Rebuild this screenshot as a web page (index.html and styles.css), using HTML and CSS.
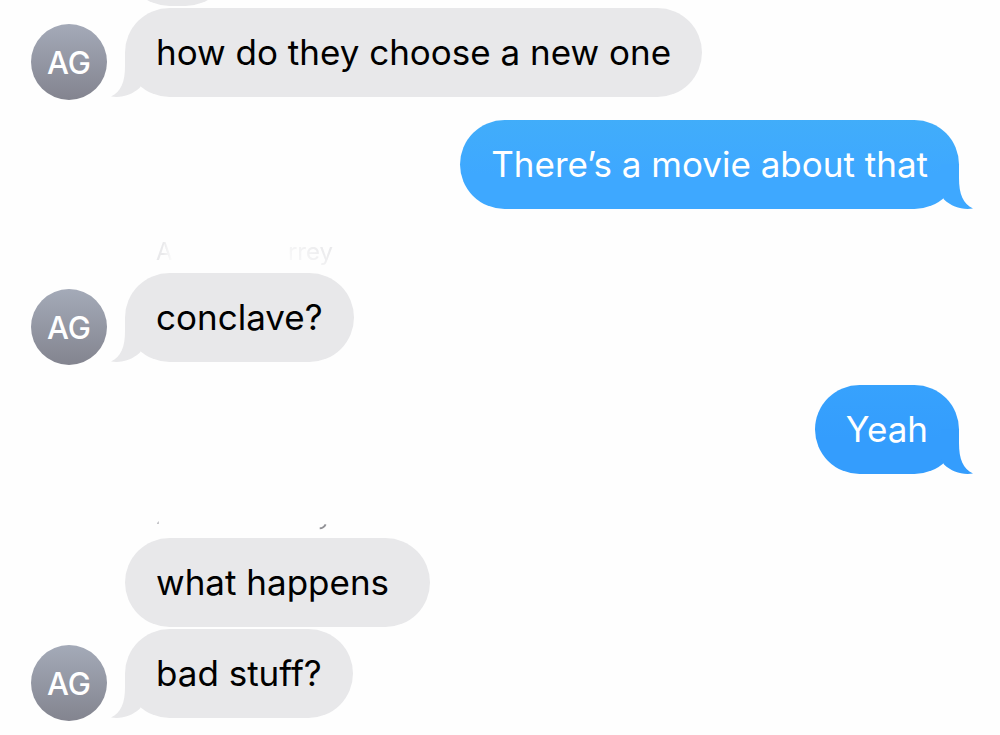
FILE: index.html
```html
<!DOCTYPE html>
<html lang="en">
<head>
<meta charset="utf-8">
<meta name="viewport" content="width=device-width, initial-scale=1">
<title>Messages</title>
<link rel="stylesheet" href="styles.css">
</head>
<body>
<svg class="defs" aria-hidden="true">
  <symbol id="tail" viewBox="0 0 32 45"><path d="M14 0V14C14 30 10 40 0 44.500C11 46 21 43 29 35.500L32 30V0Z"/></symbol>
</svg>
<main class="thread">
  <section class="group">
    <div class="stack">
      <p class="bubble bubble-short"></p>
      <div class="row">
        <span class="avatar">AG</span>
        <p class="bubble tailed">how do they choose a new one<svg class="tail"><use href="#tail"/></svg></p>
      </div>
    </div>
  </section>
  <section class="group sent">
    <p class="bubble tailed sky">There’s a movie about that<svg class="tail"><use href="#tail"/></svg></p>
  </section>
  <section class="group">
    <div class="sender faint"><span class="sender-start">A</span><span class="sender-end">rrey</span></div>
    <div class="row">
      <span class="avatar">AG</span>
      <p class="bubble tailed">conclave?<svg class="tail"><use href="#tail"/></svg></p>
    </div>
  </section>
  <section class="group sent">
    <p class="bubble tailed azure">Yeah<svg class="tail"><use href="#tail"/></svg></p>
  </section>
  <section class="group">
    <div class="sender">
      <svg class="specks" viewBox="0 0 180 32" aria-hidden="true"><path d="M1 22l2-2v3H1z" fill="#c4c4c8"/><path d="M166.500 27.500q4 0 6-4" fill="none" stroke="#929297" stroke-width="2"/></svg>
    </div>
    <div class="stack">
      <p class="bubble">what happens </p>
      <div class="row">
        <span class="avatar">AG</span>
        <p class="bubble tailed">bad stuff?<svg class="tail"><use href="#tail"/></svg></p>
      </div>
    </div>
  </section>
</main>
</body>
</html>
```
FILE: styles.css
```css
* { box-sizing: border-box; }

body {
  margin: 0;
  background: #fefefe;
  color: #000;
  font-family: Inter, "Liberation Sans", sans-serif;
  overflow: hidden;
}

.defs {
  position: absolute;
  width: 0;
  height: 0;
}

/* The thread is scrolled so that the oldest bubble is nearly out of view. */
.thread {
  display: flex;
  flex-direction: column;
  gap: 23px;
  margin-top: -83px;
  padding: 0 41px 16px 31px;
}

.group,
.stack {
  display: flex;
  flex-direction: column;
  align-items: flex-start;
}

.stack { gap: 2px; }

.sent { align-items: flex-end; }

.row {
  display: flex;
  align-items: flex-end;
  gap: 18px;
}

.group > .stack > .bubble,
.sender { margin-left: 94px; }

.bubble {
  --fill: #e8e8ea;
  position: relative;
  min-height: 89px;
  margin: 0;
  padding: 22px 31px 23px;
  border-radius: 45px;
  background: var(--fill);
  font-size: 35px;
  line-height: 44px;
  white-space: pre-wrap;
}

.bubble-short { width: 105px; }

.sky {
  --fill: #3ea8ff;
  background: linear-gradient(#41adfa, #3ea8ff 60%);
}

.azure {
  --fill: #349dfd;
  background: linear-gradient(#37a2fd, #349dfd 60%);
}

.sent .bubble { color: #fff; }

.tail {
  position: absolute;
  bottom: 0;
  left: -14px;
  width: 32px;
  height: 45px;
  fill: var(--fill);
}

.sent .tail {
  right: -14px;
  left: auto;
  transform: scaleX(-1);
}

.avatar {
  display: flex;
  align-items: center;
  justify-content: center;
  width: 76px;
  height: 76px;
  margin-bottom: -3px;
  border-radius: 50%;
  background: linear-gradient(#a4aab8, #83848f);
  color: #fff;
  font-size: 31px;
  font-weight: 500;
}

.sender {
  display: flex;
  width: 210px;
  height: 41px;
  padding: 4px 2px 0 31px;
  font-size: 24px;
  line-height: 32px;
}

.faint {
  justify-content: space-between;
  color: #e9e9eb;
}

.sender-start { mask-image: linear-gradient(to right, #000 40%, transparent); }

.sender-end { mask-image: linear-gradient(to top right, transparent, #000 80%); }

.specks {
  width: 180px;
  height: 32px;
}
```
